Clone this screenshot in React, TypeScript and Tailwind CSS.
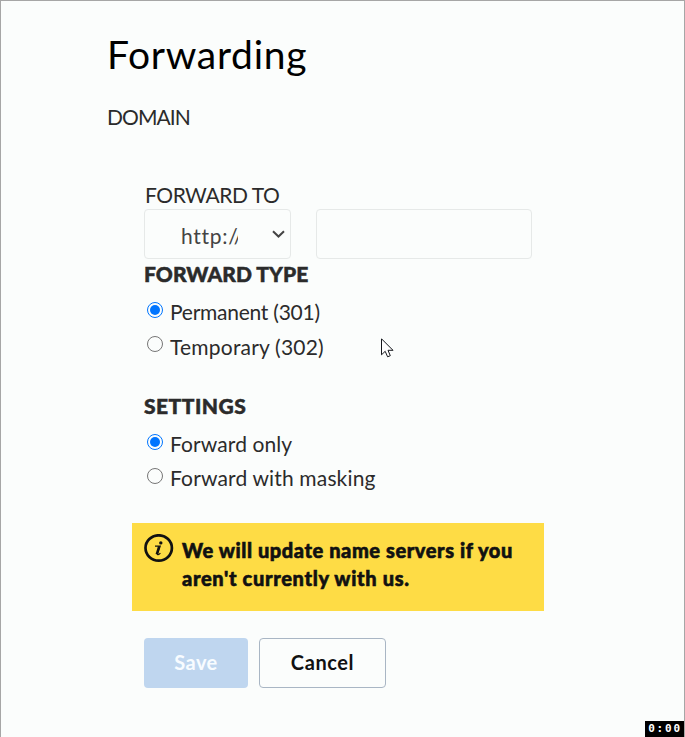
import type { ReactNode } from "react";

function Radio({ checked = false }: { checked?: boolean }) {
  return (
    <span
      className={`mt-[4px] mr-[7px] flex h-4 w-4 shrink-0 items-center justify-center rounded-full border ${
        checked ? "border-[#0075ff]" : "border-[#767676]"
      }`}
    >
      {checked && <span className="h-2.5 w-2.5 rounded-full bg-[#0075ff]" />}
    </span>
  );
}

function Option({ checked, children }: { checked?: boolean; children: ReactNode }) {
  return (
    <label className="flex h-[28px] items-start pl-[3px] text-[21px] leading-[28px] whitespace-nowrap">
      <Radio checked={checked} />
      {children}
    </label>
  );
}

export default function App() {
  return (
    <div className="relative flex h-[737px] w-[685px] flex-col overflow-hidden border-t border-r border-l border-[#a6a6a6] bg-[#fbfdfc] font-['Lato',sans-serif] text-[#2b2b2b]">
      <h1 className="mt-[28px] ml-[106px] h-[50px] text-[39px] leading-[50px] tracking-[0.7px] text-black">Forwarding</h1>
      <p className="mt-[24px] ml-[106px] h-[28px] text-[21px] leading-[28px] tracking-[-0.95px]">DOMAIN</p>
      <main className="ml-[143px] flex w-[400px] flex-col">
        <p className="mt-[50px] ml-[1px] h-[28px] text-[21px] leading-[28px] tracking-[-0.45px]">FORWARD TO</p>
        <div className="flex gap-[25px]">
          <div className="flex h-[50px] w-[147px] items-center justify-between rounded border border-[#e6e9e8] pr-[5px] pl-[36px]">
            <span className="mt-[3px] w-[57px] overflow-hidden text-[21px] leading-[28px] tracking-[0.7px] whitespace-nowrap text-[#444]">http://</span>
            <svg width="13" height="8" viewBox="0 0 13 8" fill="none" stroke="#444" strokeWidth="2">
              <path d="M1 1.2 6.5 6.5 12 1.2" />
            </svg>
          </div>
          <div className="h-[50px] w-[216px] rounded border border-[#e6e9e8]" />
        </div>
        <h2 className="mt-[1px] h-[28px] text-[21px] leading-[28px] font-black tracking-[0.05px] [-webkit-text-stroke:0.5px]">FORWARD TYPE</h2>
        <div className="mt-[10px] flex flex-col gap-[6px]">
          <Option checked><span className="tracking-[-0.25px]">Permanent (301)</span></Option>
          <Option><span className="mt-[1px] tracking-[0.2px]">Temporary (302)</span></Option>
        </div>
        <h2 className="mt-[32px] h-[28px] text-[21px] leading-[28px] font-black tracking-[0.5px] [-webkit-text-stroke:0.5px]">SETTINGS</h2>
        <div className="mt-[10px] flex flex-col gap-[6px]">
          <Option checked><span className="tracking-[0.1px]">Forward only</span></Option>
          <Option><span className="tracking-[0.15px]">Forward with masking</span></Option>
        </div>
      </main>
      <div className="mt-[31px] ml-[131px] flex h-[88px] w-[412px] bg-[#fedc45] pt-[11px] pl-[12px] text-[#111]">
        <svg width="30" height="29" viewBox="0 0 30 29" className="mr-[8px] shrink-0" fill="none" stroke="#111">
          <ellipse cx="14.7" cy="14" rx="13.2" ry="12.7" strokeWidth="2.7" />
          <circle cx="16.8" cy="8.9" r="1.7" fill="#111" stroke="none" />
          <path d="M11 12.2h5.2l-2.6 7.6c-.4 1.5 1 1 2.8-.7" strokeWidth="1.2" />
          <path d="M15.1 12.4 12.7 20.3" strokeWidth="2.3" />
        </svg>
        <p className="mt-[2px] text-[20px] leading-[28px] font-black tracking-[0.58px] whitespace-nowrap [-webkit-text-stroke:0.6px]">
          <span className="block">We will update name servers if you</span>
          <span className="block tracking-[0.68px]">aren't currently with us.</span>
        </p>
      </div>
      <div className="mt-[27px] ml-[143px] flex gap-[11px] text-[20px] font-bold">
        <button className="h-[50px] w-[104px] rounded bg-[#bfd6ef] pb-[2px] tracking-[0.4px] text-[#f8fcff]">Save</button>
        <button className="h-[50px] w-[127px] rounded border border-[#a9b6c4] pb-[2px] tracking-[0.6px] text-[#111]">Cancel</button>
      </div>
      <svg className="absolute top-[337px] left-[380px]" width="13" height="21" viewBox="0 0 13 21">
        <path d="M.5.8v16l3.7-3.5 2.4 5.5 2.7-1.1L7 12.3h5Z" fill="white" stroke="#15171c" />
      </svg>
      <div className="absolute right-[-1px] bottom-0 flex h-[16px] w-[40px] items-center justify-center bg-black font-['DejaVu_Sans_Mono',monospace] text-[11px] leading-[16px] font-bold tracking-[1.8px] text-white">
        0:00
      </div>
    </div>
  );
}
